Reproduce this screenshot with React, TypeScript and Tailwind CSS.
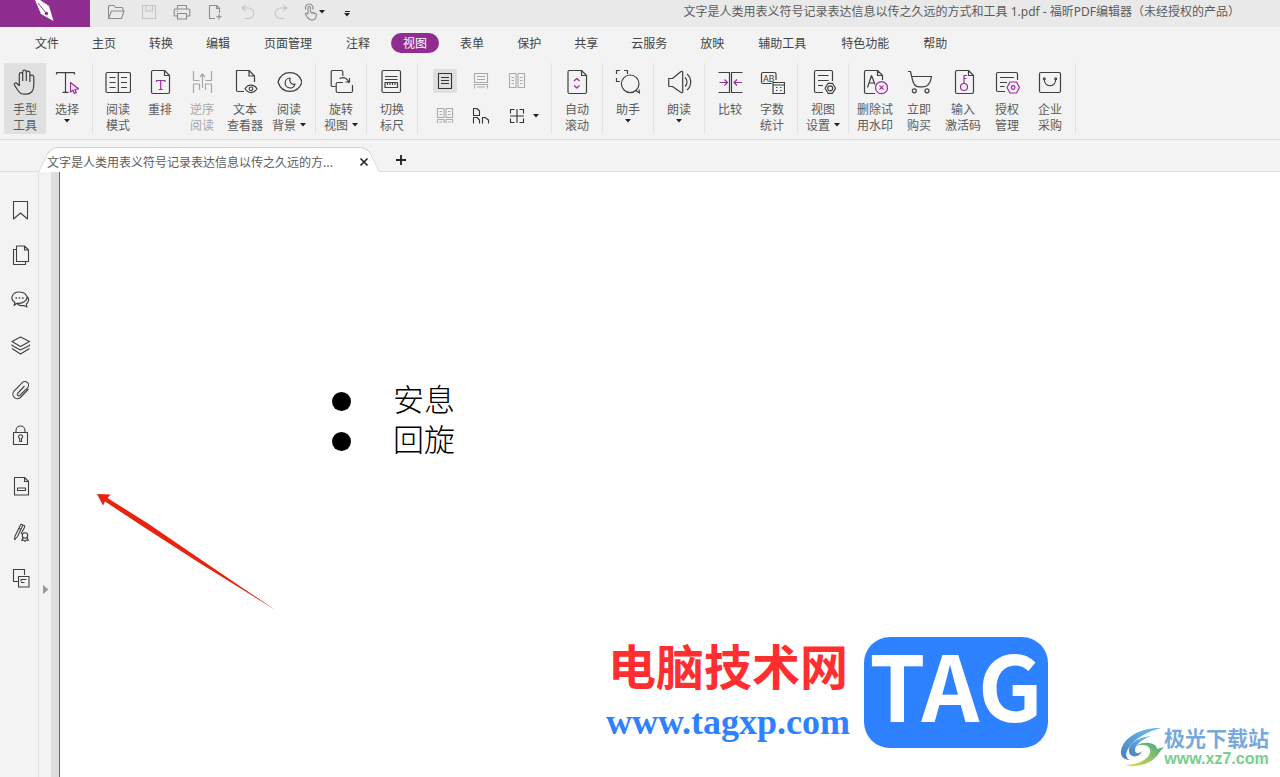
import React from "react";

const purple = "#97309a";

function Svg({ size = 26, color = "#404040", w = 1.2, children }: { size?: number; color?: string; w?: number; children: React.ReactNode }) {
  return (
    <svg aria-hidden="true" width={size} height={size} viewBox={`0 0 ${size} ${size}`} fill="none" stroke={color} strokeWidth={w} strokeLinejoin="round" className="block shrink-0">
      {children}
    </svg>
  );
}

function Caret() {
  return (
    <svg aria-hidden="true" width="6" height="4" viewBox="0 0 6 4" className="block shrink-0">
      <path d="M0 0H6L3 3.5Z" fill="#222" />
    </svg>
  );
}

const quickTools = [
  { label: "打开", color: "#8c8c8c", art: <path d="M1.5 16V3.5a1 1 0 0 1 1-1H7l1.500 2h6.500a1 1 0 0 1 1 1V8M1.500 15.500 4.500 8h12.500l-2.500 7.500z" /> },
  { label: "保存", color: "#c4c4c4", art: <path d="M2.500 2.500h13v13h-13zM6 2.500V8h6.500V2.500M9 5h1.500" /> },
  { label: "打印", color: "#8c8c8c", art: <path d="M4.500 6V2.500h9V6M4.500 13H2a.8.8 0 0 1-.8-.8V7a1 1 0 0 1 1-1h13.600a1 1 0 0 1 1 1v5.200a.8.8 0 0 1-.8.8h-2.500M4.500 10.500h9v5.500h-9zM3.500 8.200H5" /> },
  { label: "新建", color: "#8c8c8c", art: <path d="M9 15.500H3.500v-13h7l3 3V10M10.500 2.500v3h3M13 11v5.500M10.200 13.700h5.500" /> },
  { label: "撤销", color: "#c4c4c4", art: <path d="M6.500 2 3 5l3.500 3M3 5h6.500a5 5 0 0 1 0 10.500H6" /> },
  { label: "重做", color: "#c4c4c4", art: <path d="M11.500 2 15 5l-3.500 3M15 5H8.500a5 5 0 0 0 0 10.500H12" /> },
];

const menus = ["文件", "主页", "转换", "编辑", "页面管理", "注释", "视图", "表单", "保护", "共享", "云服务", "放映", "辅助工具", "特色功能", "帮助"];

type Tool = { lines: string[]; art: React.ReactNode; caret?: "below" | "side"; active?: boolean; disabled?: boolean; wide?: boolean };

const groupsBefore: Tool[][] = [
  [
    { lines: ["手型", "工具"], active: true, art: <path d="M7.300 17V5.300a1.700 1.700 0 0 1 3.400 0V12M10.700 12V3a1.800 1.800 0 0 1 3.600 0V12M14.300 12V4a1.800 1.800 0 0 1 3.600 0V13M17.900 13V8a1.900 1.900 0 0 1 3.900 0V16c0 6-2.600 9.200-8 9.200h-1.500c-3 0-5-1.400-6.600-4.200L2.600 16.300c-1-1.900.9-3.300 2.500-1.800L7.300 16.800" /> },
    { lines: ["选择"], caret: "below", art: <><path d="M2.500 5.500V3.700H20.500V5.500M11.500 3.700V23.300M8.500 23.300H14.500" /><path d="M16.500 13.500V23l2.500-1.800 1.300 3.300 2-.8-1.300-3.200 3.500-.7z" stroke={purple} fill="#f5e0f7" /></> },
  ],
  [
    { lines: ["阅读", "模式"], art: <path d="M2.500 3.500H24a1.500 1.500 0 0 1 1.500 1.500V22a1.500 1.500 0 0 1-1.500 1.500H2.500A1.500 1.500 0 0 1 1 22V5A1.500 1.500 0 0 1 2.500 3.500M13.300 3.500V23.500M4.500 8.500H10.500M4.500 13.500H10.500M4.500 18.500H10.500M16 8.500H22M16 13.500H22M16 18.500H22" /> },
    { lines: ["重排"], art: <><path d="M6 1.500H17.500L22.500 6.500V23a1.500 1.500 0 0 1-1.500 1.500H6A1.500 1.500 0 0 1 4.500 23V3A1.500 1.500 0 0 1 6 1.500M17.500 1.500V6.500H22.500" /><path d="M9.500 13V11.500H18V13M13.700 11.500V20.500M11.700 20.500H15.700" stroke={purple} /></> },
    { lines: ["逆序", "阅读"], disabled: true, art: <path d="M4.500 2V11.500H10.500M22.500 2V11.500H16.500M13.500 19V5.500M11 8l2.500-3L16 8M4.500 24V15H10.500V21M22.500 24V15H16.500V21" /> },
    { lines: ["文本", "查看器"], wide: true, art: <><path d="M12 22.500H6A1.500 1.500 0 0 1 4.500 21V1.500H17L22.500 7V13M17 1.500V7H22.500" /><path d="M13 19.800c3-5 9-5 12 0-3 5-9 5-12 0z" /><circle cx="19" cy="19.800" r="1.800" /></> },
    { lines: ["阅读", "背景"], wide: true, caret: "side", art: <><path d="M2 13C6 .5 22 .5 26 13 22 25.500 6 25.500 2 13z" /><path d="M14 9a5 5 0 1 0 5 6.200C15.500 16 13 13 14 9z" /></> },
  ],
  [{ lines: ["旋转", "视图"], caret: "side", art: <><path d="M7.500 17.500H4.500A1.300 1.300 0 0 1 3.200 16.200V2.800A1.300 1.300 0 0 1 4.500 1.500H13.500A1.300 1.300 0 0 1 14.800 2.800V7" /><path d="M15 13.500H9.500A1.300 1.300 0 0 0 8.200 14.800V22a1.500 1.500 0 0 0 1.500 1.500H23A1.500 1.500 0 0 0 24.500 22V16M11.500 9.500C16 7.500 20 9.500 21 14M17.500 13H21.500V9" /></> }],
  [{ lines: ["切换", "标尺"], art: <path d="M4.500 1.500H20A1.500 1.500 0 0 1 21.500 3V22A1.500 1.500 0 0 1 20 23.500H4.500A1.500 1.500 0 0 1 3 22V3A1.500 1.500 0 0 1 4.500 1.500M6 7.500H18.500M6 10.500H18.500M6 13.500H18.500V18.500H6zM8.500 13.500V16M11 13.500V16M13.500 13.500V16M16 13.500V16" /> }],
];

const groupsAfter: Tool[][] = [
  [{ lines: ["自动", "滚动"], art: <><path d="M5.500 1.500H17.500L22.500 6.500V23a1.500 1.500 0 0 1-1.500 1.500H5.500A1.500 1.500 0 0 1 4 23V3A1.500 1.500 0 0 1 5.500 1.500M17.500 1.500V6.500H22.500" /><path d="M10 12 12.800 9.500 15.600 12M10 16.500 12.800 19 15.600 16.500" stroke={purple} /></> }],
  [{ lines: ["助手"], caret: "below", art: <><path d="M1.500 5V1.500H5M9 1.500H12.500V5M1.500 9V12.500H5" /><circle cx="15.200" cy="14.800" r="8.800" /><path d="M20.500 21.500 24.500 24 24 20.500" /></> }],
  [{ lines: ["朗读"], caret: "below", art: <path d="M2.700 9.500H6.500L15 2.500C16 2 16.700 2.300 16.700 3V23c0 .8-.8 1-1.700.4L6.500 17.500H3.500A.8.8 0 0 1 2.700 16.700zM19 8.500a6 6 0 0 1 0 9M21 5a10.500 10.500 0 0 1 0 16" /> }],
  [
    { lines: ["比较"], art: <><path d="M1.500 3.500H12.500V23.500H1.500M25.500 3.500H14.500V23.500H25.500" /><path d="M2.500 13.500H10.500M7.500 10.500 10.500 13.500 7.500 16.500M25 13.500H17M20 10.500 17 13.500 20 16.500" stroke={purple} /></> },
    { lines: ["字数", "统计"], art: <><path d="M12.500 14.500H4A1.500 1.500 0 0 1 2.500 13V5A1.500 1.500 0 0 1 4 3.500H15.500A1.500 1.500 0 0 1 17 5V11M14 13.500H25.500V24.500H14zM14 16H25.500M17 18.500H18.500M21 18.500H22.500M17 21.500H18.500M21 21.500H22.500" /><text x="4" y="12.500" fontSize="9" fontFamily="Roboto, sans-serif" fill="#404040" stroke="none">AB</text></> },
  ],
  [{ lines: ["视图", "设置"], caret: "side", art: <><path d="M13 23.500H6A1.500 1.500 0 0 1 4.500 22V3A1.500 1.500 0 0 1 6 1.500H21A1.500 1.500 0 0 1 22.500 3V12M8 6.500H18.500M8 11.500H18.500M8 16.500H13" /><path d="M18 14.300H22.500L25.500 19.300 22.500 24.300H18L15 19.300z" /><circle cx="20.200" cy="19.300" r="2.500" /></> }],
  [
    { lines: ["删除试", "用水印"], wide: true, art: <><path d="M13 24.500H4A1.500 1.500 0 0 1 2.500 23V3A1.500 1.500 0 0 1 4 1.500H15.500L20.500 6.500V11M15.500 1.500V6.500H20.500M5.500 18.500 9.500 6.500 13 15.500M7 14H12.500" /><circle cx="19.500" cy="18.700" r="6" stroke={purple} fill="#faf0fb" /><path d="M17.500 16.700 21.500 20.700M21.500 16.700 17.500 20.700" stroke={purple} /></> },
    { lines: ["立即", "购买"], wide: true, art: <><path d="M2 2.500H4.500L6.500 11C7.500 15.500 10 17.800 13 17.800H17C22 17.800 24.500 14 25.500 7.500H5.700" /><circle cx="8.300" cy="21.800" r="2" /><circle cx="21" cy="21.800" r="2" /></> },
    { lines: ["输入", "激活码"], wide: true, art: <><path d="M7 1.500H18.500L23.500 6.500V23a1.500 1.500 0 0 1-1.500 1.500H7A1.500 1.500 0 0 1 5.500 23V3A1.500 1.500 0 0 1 7 1.500M18.500 1.500V6.500H23.500" /><path d="M14 14.500V6M14 6.500H17M14 9.500H16.500" stroke={purple} /><circle cx="14" cy="18" r="3.500" stroke={purple} /></> },
    { lines: ["授权", "管理"], wide: true, art: <><path d="M11 22.500H4A1.500 1.500 0 0 1 2.500 21V5A1.500 1.500 0 0 1 4 3.500H22A1.500 1.500 0 0 1 23.500 5V11M6 8.500H20M6 13.500H13M6 17.500H10.500" /><path d="M16 13H22.500L25.500 18.500 22.500 24H16L13 18.500z" stroke={purple} fill="#faf0fb" /><circle cx="19.200" cy="18.500" r="1.800" stroke={purple} /></> },
    { lines: ["企业", "采购"], art: <><path d="M4 3.500H22A1.500 1.500 0 0 1 23.500 5V22A1.500 1.500 0 0 1 22 23.500H4A1.500 1.500 0 0 1 2.500 22V5A1.500 1.500 0 0 1 4 3.500M7.300 10C7.300 19 18.700 19 18.700 10" /><circle cx="7.300" cy="9.800" r=".9" /><circle cx="18.700" cy="9.800" r=".9" /></> },
  ],
];

const layouts = [
  { label: "单页", color: "#333", active: true, art: <path d="M3.500 2.500H16.500V17.500H3.500zM6 6.500H14M6 9.500H14M6 12.500H14" /> },
  { label: "连续", color: "#aaa", art: <path d="M3.500 2.500H16.500V11.500H3.500zM6 5.500H14M6 8.500H14M3.500 17.500V13.500H16.500V17.500M6 16H14" /> },
  { label: "对开", color: "#aaa", art: <path d="M2.500 2.500H9V16.500H2.500zM11 2.500H17.500V16.500H11zM4.500 6.500H7M4.500 9.500H7M4.500 12.500H7M13 6.500H15.500M13 9.500H15.500M13 12.500H15.500" /> },
  { label: "连续对开", color: "#aaa", art: <path d="M2.500 2.500H9V11.500H2.500zM11 2.500H17.500V11.500H11zM4.500 5.500H7M4.500 8.500H7M13 5.500H15.500M13 8.500H15.500M2.500 17V13.500H9V17M11 17V13.500H17.500V17M4.500 16H7M13 16H15.500" /> },
  { label: "独立封面", color: "#333", art: <path d="M2.500 9.500V2.500H6L8.500 5V9.500zM2.500 17.500V11.500H6L8.500 14V17.500M11.500 17.500V11.500H14L17.500 14V17.500" /> },
  { label: "拆分", color: "#333", art: <path d="M3.500 7.500V3.500H7.500M12.500 3.500H16.500V7.500M3.500 12.500V16.500H7.500M12.500 16.500H16.500V12.500M10 3V17M3 10H17" /> },
];

const panelsTop = [
  { label: "书签", art: <path d="M3.500 1.500H17.500V19L10.500 13 3.500 19z" /> },
  { label: "页面", art: <path d="M6.500 1H14.500L18.500 5V16.500H6.500zM14.500 1V5H18.500M6.500 4.500H3.500V19.500H15.500V16.500" /> },
  { label: "注释", art: <><path d="M4 15.500 5 12.500C-1 9 2.500 2 9 2s11 5.500 5.500 9.500C12 13.500 9 13.500 7 13.200zM16.500 6c3.500 3 2 6.500-.2 8l.7 3-3-1.500c-3 .5-5 0-6.500-1.500" /><path d="M5.500 8H7M8.700 8H10.200M12 8H13.500" strokeWidth="1.600" /></> },
  { label: "图层", art: <path d="M2 6.500 10.500 2 19.500 6.500 10.500 11.500zM2 9.500V10.500L10.500 15 19.500 10.500V9.500M2 13.500 10.500 19 19.500 13.500" /> },
  { label: "附件", art: <path d="M14.500 6 7.500 13.500a1.500 1.500 0 0 0 2.200 2L17.500 7.800a3.600 3.600 0 0 0-5.200-5.200L4 11.200a4.500 4.500 0 0 0 6.400 6.300L18.500 9" /> },
  { label: "安全", art: <><path d="M3.500 7.500H17.500V19.500H3.500zM6 7.500V5.500a4.500 4.500 0 0 1 9 0V7.500" /><path d="M9.700 13.500a2 2 0 1 1 1.800 0V16.500H9.700z" /></> },
];
const panelsBottom = [
  { label: "字段", art: <path d="M4.500 1.500H14.500L18.500 5.500V19H4.500zM14.500 1.500V5.500H18.500M7.500 12H15.500V14.500H7.500z" /> },
  { label: "签名", art: <><path d="M4.500 18 5 14 10.500 3c.7-1.200 2.500-.4 2 1L7.500 14.500 4.500 18M9 6.500 11 7.500M12.500 3.500c2.500-1 2.500 1 1.800 2.300L11 12" /><circle cx="15" cy="13.500" r="2.700" /><path d="M13 15.500 11.700 18.500 13.700 18 15 19.500 16.300 18 18.500 18.500 17 15.500" /></> },
  { label: "对比", art: <path d="M8.500 13.500H3.500V1.500H14.500V7M8.500 8.500H19V19H8.500zM11 13.500V11.500H16.500M11 14.500H14.500" /> },
];

function ToolButton({ tool }: { tool: Tool }) {
  return (
    <button
      type="button"
      disabled={tool.disabled}
      className={`flex h-[71px] shrink-0 flex-col items-center pt-1.5 ${tool.wide ? "w-11" : "w-[42px]"} ${tool.active ? "rounded-xs bg-[#e0e0e0]" : ""} ${tool.disabled ? "text-[#a8a8a8]" : "text-[#5c5c5c]"}`}
    >
      <Svg color={tool.disabled ? "#a8a8a8" : "#404040"}>{tool.art}</Svg>
      <span className="mt-1.5 flex flex-col items-center leading-4 whitespace-nowrap">
        {tool.lines.map((line, i) => (
          <span key={line} className="flex items-center gap-1">
            {line}
            {tool.caret === "side" && i === 1 && <Caret />}
          </span>
        ))}
      </span>
      {tool.caret === "below" && <span className="pt-0.5"><Caret /></span>}
    </button>
  );
}

function Group({ tools }: { tools: Tool[] }) {
  return (
    <div className="flex shrink-0 border-r border-[#e2e2e2] px-1">
      {tools.map((t) => <ToolButton key={t.lines.join("")} tool={t} />)}
    </div>
  );
}

export default function App() {
  return (
    <div className="flex min-h-screen flex-col overflow-hidden bg-[#f3f3f3] text-xs text-[#5c5c5c] [font-family:'Noto_Sans_CJK_SC',sans-serif]">
      <header className="flex h-[27px] items-stretch bg-[#e9e9e9]">
        <div className="flex w-[90px] justify-center bg-[#8f2e90]">
          <svg width="20" height="22" viewBox="0 0 20 22" aria-label="Foxit" role="img">
            <path d="M0 0 5 0 14 6 18.500 21 6 14z" fill="#fff" />
            <path d="M3 3 11 13" stroke="#8f2e90" strokeWidth="1" />
            <circle cx="11.500" cy="13.500" r="1.700" fill="#8f2e90" />
          </svg>
        </div>
        <div className="flex items-center pb-1 pl-[9px]">
          {quickTools.map((q) => (
            <button key={q.label} type="button" aria-label={q.label} className="flex w-[33px] justify-center">
              <Svg size={18} color={q.color} w={1.1}>{q.art}</Svg>
            </button>
          ))}
          <button type="button" aria-label="手型" className="flex w-8 items-center justify-center">
            <Svg size={18} color="#8c8c8c" w={1.1}>
              <path d="M7 11V4.500a1.200 1.200 0 0 1 2.400 0V9l4.600 1c1.200.3 1.500 1 1.400 2-.2 3-1.400 5-4.400 5-2.500 0-3.600-1-4.700-3L4.500 11.500c-.6-1.200.8-2 1.600-1L7 11.500M4.800 6.500a3.800 3.800 0 1 1 6.800 0M11 9.500V11M13 10V11.500" />
            </Svg>
            <Caret />
          </button>
          <button type="button" aria-label="自定义快速访问工具栏" className="flex w-9 flex-col items-center gap-px pt-1">
            <span className="h-px w-[5px] bg-[#222]" />
            <Caret />
          </button>
        </div>
        <h1 className="ml-auto truncate pr-10 leading-6 [font-family:'Noto_Sans','Noto_Sans_CJK_SC',sans-serif]">文字是人类用表义符号记录表达信息以传之久远的方式和工具 1.pdf - 福昕PDF编辑器（未经授权的产品）</h1>
      </header>

      <nav className="flex h-8 items-center gap-[9px] pl-[23px]">
        {menus.map((m) => (
          <button
            key={m}
            type="button"
            className={`h-5 shrink-0 rounded-full leading-5 ${m.length === 4 ? "px-[13px]" : "px-3"} ${m === "视图" ? "bg-[#8f2e90] text-white" : "text-[#444]"}`}
          >
            {m}
          </button>
        ))}
      </nav>

      <section aria-label="视图" className="flex border-b border-[#dedede] pt-1 pb-[5px]">
        {groupsBefore.map((g, i) => <Group key={i} tools={g} />)}
        <div className="grid shrink-0 grid-cols-3 grid-rows-2 border-r border-[#e2e2e2] pr-4 pl-[9px]">
          {layouts.map((l) => (
            <button key={l.label} type="button" aria-label={l.label} className="relative flex w-9 items-center justify-center">
              <span className={`rounded-xs p-0.5 ${l.active ? "bg-[#dfdfdf]" : ""}`}>
                <Svg size={20} color={l.color} w={1.1}>{l.art}</Svg>
              </span>
              {l.label === "拆分" && <span className="absolute -right-1"><Caret /></span>}
            </button>
          ))}
        </div>
        {groupsAfter.map((g, i) => <Group key={i} tools={g} />)}
      </section>

      <div className="flex h-8 items-end border-b border-[#dedede] pl-[38px]">
        <div className="relative z-10 -mb-px flex h-[25px] w-[341px] items-center pl-[9px]">
          <span className="absolute inset-y-0 left-0 w-1/2 origin-bottom-left -skew-x-[26deg] rounded-tl-lg border-t border-l border-[#cfcfcf] bg-white" />
          <span className="absolute inset-y-0 right-0 w-1/2 origin-bottom-right skew-x-[26deg] rounded-tr-lg border-t border-r border-[#cfcfcf] bg-white" />
          <span className="relative mt-1 flex-1 whitespace-nowrap">文字是人类用表义符号记录表达信息以传之久远的方...</span>
          <button type="button" aria-label="关闭" className="relative mt-1 mr-2.5">
            <svg width="10" height="10" viewBox="0 0 10 10" stroke="#222" strokeWidth="1.600"><path d="M1.500 1.500 8.500 8.500M8.500 1.500 1.500 8.500" /></svg>
          </button>
        </div>
        <button type="button" aria-label="新建标签" className="mb-[5px] ml-4">
          <svg width="12" height="12" viewBox="0 0 12 12" stroke="#222" strokeWidth="1.800"><path d="M6 1V11M1 6H11" /></svg>
        </button>
      </div>

      <div className="flex flex-1 items-stretch">
        <aside className="flex w-[39px] shrink-0 flex-col border-r border-[#e0e0e0] pt-[15px]">
          {panelsTop.map((p) => (
            <button key={p.label} type="button" aria-label={p.label} className="flex h-[45px] w-10 items-center justify-center">
              <Svg size={20} w={1.1}>{p.art}</Svg>
            </button>
          ))}
          <div className="pt-1.5">
            {panelsBottom.map((p) => (
              <button key={p.label} type="button" aria-label={p.label} className="flex h-[46px] w-10 items-center justify-center">
                <Svg size={20} w={1.1}>{p.art}</Svg>
              </button>
            ))}
          </div>
        </aside>
        <div className="w-3 shrink-0 pt-[413px] pl-1">
          <button type="button" aria-label="展开面板" className="block">
            <svg width="6" height="9" viewBox="0 0 6 9" className="block"><path d="M0 0 5.500 4.500 0 9z" fill="#999" /></svg>
          </button>
        </div>
        <div className="w-[9px] shrink-0 border-r border-[#666] bg-[#dedede]" />
        <main className="relative flex-1 bg-white pt-[209px] pl-[272px]">
          <ul className="text-[31px] leading-10 font-light text-black [font-family:'Liberation_Serif','Noto_Sans_CJK_SC',serif]">
            {["安息", "回旋"].map((t) => (
              <li key={t} className="flex h-10 items-center gap-[42px]">
                <span className="size-[19px] rounded-full bg-black" />
                {t}
              </li>
            ))}
          </ul>

          <svg aria-hidden="true" className="absolute top-[320px] left-[35px]" width="184" height="122" viewBox="95 492 184 122">
            <path d="M97 494 110.500 494.500 107.500 498 148 523.500 200 559 276 610.500 198 562 146 528.500 105 501.500 103 505.500z" fill="#e8230f" />
          </svg>

          <div className="absolute top-[465px] left-[546px] flex items-start gap-[14px]">
            <div className="flex flex-col items-center">
              <span className="text-5xl leading-[54px] font-bold text-[#ff2f2f]">电脑技术网</span>
              <a href="#" className="text-4xl leading-[62px] font-bold text-[#2f82ff] [font-family:'Liberation_Serif',serif]">www.tagxp.com</a>
            </div>
            <div className="flex h-[111px] w-[184px] items-start justify-center rounded-[26px] bg-[#2f82ff] text-[90px] leading-[92px] font-bold text-white">TAG</div>
          </div>

          <div className="absolute right-[11px] bottom-1.5 flex items-center">
            <svg aria-hidden="true" width="44" height="42" viewBox="0 0 44 42">
              <defs>
                <linearGradient id="sky" x1="0" y1="1" x2="1" y2="0"><stop offset="0" stopColor="#4a7fc0" /><stop offset="1" stopColor="#6cc3ee" /></linearGradient>
                <linearGradient id="leaf" x1="0" y1="1" x2="1" y2="0"><stop offset="0" stopColor="#e3e04a" /><stop offset="1" stopColor="#3fa58c" /></linearGradient>
              </defs>
              <path d="M41 1C22 0 3 10 1 24c-1 6 4 9 9 9-4-2-5-6-2-11C14 12 26 5 41 1z" fill="url(#sky)" />
              <path d="M31 9C18 10 8 17 9 25c1 6 11 6 13-1-3 3-7 3-7-1 0-5 6-10 16-14z" fill="url(#sky)" />
              <path d="M14 20c8-4 18-2 16 6-2 7-13 12-26 12 15 4 30-3 35-12 2-3 4-5 5-6l-7 2c0-7-15-9-23-2z" fill="url(#leaf)" />
            </svg>
            <div className="flex flex-col items-center pb-0.5">
              <span className="text-[21px] leading-6 font-bold text-[#78a9dc]">极光下载站</span>
              <a href="#" className="text-base leading-5 font-bold text-[#74cf90] [font-family:'Liberation_Sans',sans-serif]">www.xz7.com</a>
            </div>
          </div>
        </main>
      </div>
    </div>
  );
}
